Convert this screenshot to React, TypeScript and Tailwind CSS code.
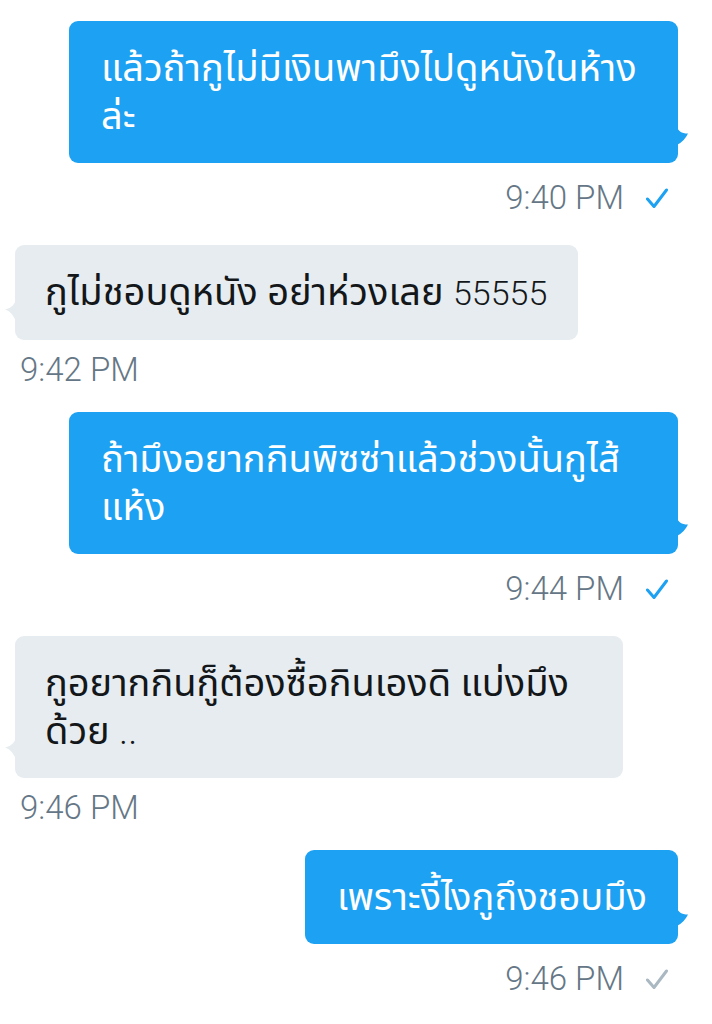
import React from "react";

const font = { fontFamily: '"Roboto", "Noto Sans Thai", "Noto Sans Thai UI", "Noto Sans", sans-serif' };

function Check({ color }: { color: string }) {
  return (
    <svg width="22" height="21" viewBox="0 0 22 21" fill="none">
      <path d="M1.5 11 L8 18.5 L20.5 2" stroke={color} strokeWidth="3" strokeLinecap="round" strokeLinejoin="round" />
    </svg>
  );
}

function TailRight({ color }: { color: string }) {
  return (
    <svg className="absolute right-[-11px] bottom-[18px]" width="12" height="18" viewBox="0 0 12 18">
      <path d="M0 0 C1.5 4 4 6.5 11 6.5 C9 11 5 15.5 0 18 Z" fill={color} />
    </svg>
  );
}

function TailLeft({ color }: { color: string }) {
  return (
    <svg className="absolute left-[-11px] bottom-[19px]" width="12" height="22" viewBox="0 0 12 22">
      <path d="M12 0 C11 5 8 9 1 10.5 C6 12 9 16 12 22 Z" fill={color} />
    </svg>
  );
}

type Msg =
  | { side: "r"; lines: React.ReactNode[]; width?: string; time: string; check: string }
  | { side: "l"; lines: React.ReactNode[]; width?: string; time: string };

export default function App() {
  const msgs: Msg[] = [
    { side: "r", lines: ["แล้วถ้ากูไม่มีเงินพามึงไปดูหนังในห้าง", "ล่ะ"], width: "w-[609px]", time: "9:40 PM", check: "#1da1f2" },
    {
      side: "l",
      lines: [
        <>
          กูไม่ชอบดูหนัง อย่าห่วงเลย <span className="text-[34px] font-light">55555</span>
        </>,
      ],
      time: "9:42 PM",
    },
    { side: "r", lines: ["ถ้ามึงอยากกินพิซซ่าแล้วช่วงนั้นกูไส้", "แห้ง"], width: "w-[609px]", time: "9:44 PM", check: "#1da1f2" },
    {
      side: "l",
      lines: [
        "กูอยากกินกู็ต้องซื้อกินเองดิ แบ่งมึง",
        <>
          ด้วย <span className="font-light">..</span>
        </>,
      ],
      width: "w-[608px]",
      time: "9:46 PM",
    },
    { side: "r", lines: ["เพราะงี้ไงกูถึงชอบมึง"], time: "9:46 PM", check: "#aab8c2" },
  ];
  return (
    <div className="w-[712px] h-[1024px] bg-white overflow-hidden pt-[21px]" style={font}>
      {msgs.map((m, i) =>
        m.side === "r" ? (
          <div key={i} className="flex flex-col items-end pr-[34px] mb-[27px]">
            <div className={`relative bg-[#1da1f2] rounded-[9px] pl-[32px] pr-[31px] py-[23px] text-white text-[38px] leading-[48px] ${m.width ?? ""}`}>
              {m.lines.map((l, j) => (
                <div key={j} className="whitespace-nowrap">{l}</div>
              ))}
              <TailRight color="#1da1f2" />
            </div>
            <div className="flex items-center mt-[15px] h-[40px]">
              <span className="text-[33px] font-light text-[#657786] leading-[40px]">{m.time}</span>
              <span className="ml-[22px] mr-[10px] flex items-center">
                <Check color={m.check} />
              </span>
            </div>
          </div>
        ) : (
          <div key={i} className="flex flex-col items-start pl-[15px] mb-[22px]">
            <div className={`relative bg-[#e6ecf0] rounded-[9px] pl-[30px] pr-[31px] py-[23px] text-[#14171a] text-[38px] leading-[48px] ${m.width ?? ""}`}>
              {m.lines.map((l, j) => (
                <div key={j} className="whitespace-nowrap">{l}</div>
              ))}
              <TailLeft color="#e6ecf0" />
            </div>
            <div className="flex items-center mt-[10px] h-[40px] ml-[5px]">
              <span className="text-[33px] font-light text-[#657786] leading-[40px]">{m.time}</span>
            </div>
          </div>
        )
      )}
    </div>
  );
}
